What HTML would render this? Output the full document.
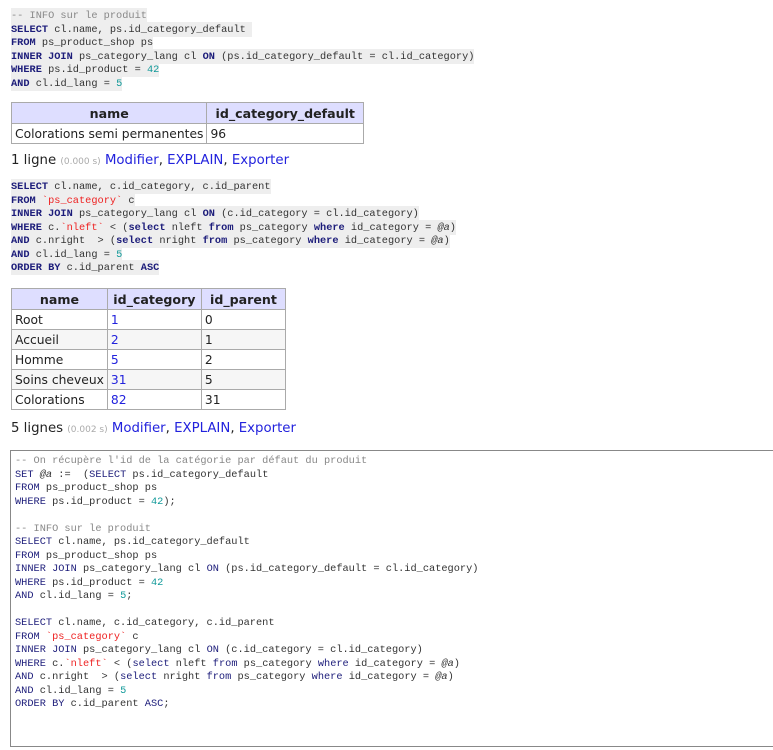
<!DOCTYPE html>
<html><head><meta charset="utf-8"><style>
body{margin:0;background:#fff;width:773px;height:750px;overflow:hidden;position:relative;font-family:"DejaVu Sans",Verdana,sans-serif;color:#222}
.code{position:absolute;left:11px;font-family:"Liberation Mono",monospace;font-size:10.3px;line-height:13.5px;color:#333;white-space:pre}
.code span.l{background:#eee;padding:2px 0 1px}
.k{color:#1c1c7a;font-weight:600}
.c{color:#888}
.n{color:#199}
.s{color:#e22}
.v{font-style:italic}
table{position:absolute;border-collapse:collapse;font-size:12.3px;left:11px}
td,th{border:1px solid #aaa;padding:0 3px;height:19px;text-align:left;white-space:nowrap}
th{background:#dedeff;text-align:center;font-weight:bold;height:20px;font-size:12.6px}
tr:nth-child(odd) td{background:#f6f6f6}
.b{color:#22d}
.info{position:absolute;left:11px;font-size:13.3px;white-space:nowrap}
.info small{font-size:9px;color:#aaa}
.info a{color:#22d}
.ta{position:absolute;left:10px;top:450px;width:770px;height:297px;border:1px solid #888;border-right:none;box-sizing:border-box}
.ta .code{left:4px;top:4px}
.ta .k{font-weight:normal}
</style></head><body>
<div class="code" style="top:10px"><span class="l c">-- INFO sur le produit</span>
<span class="l"><span class="k">SELECT</span> cl.name, ps.id_category_default </span>
<span class="l"><span class="k">FROM</span> ps_product_shop ps</span>
<span class="l"><span class="k">INNER JOIN</span> ps_category_lang cl <span class="k">ON</span> (ps.id_category_default = cl.id_category)</span>
<span class="l"><span class="k">WHERE</span> ps.id_product = <span class="n">42</span></span>
<span class="l"><span class="k">AND</span> cl.id_lang = <span class="n">5</span></span></div>

<table style="top:102px;width:353px"><tr><th style="width:188px">name</th><th>id_category_default</th></tr>
<tr><td style="background:#fff">Colorations semi permanentes</td><td style="background:#fff">96</td></tr></table>
<div class="info" style="top:153px">1 ligne <small>(0.000 s)</small> <a>Modifier</a>, <a>EXPLAIN</a>, <a>Exporter</a></div>

<div class="code" style="top:181px"><span class="l"><span class="k">SELECT</span> cl.name, c.id_category, c.id_parent</span>
<span class="l"><span class="k">FROM</span> <span class="s">`ps_category`</span> c</span>
<span class="l"><span class="k">INNER JOIN</span> ps_category_lang cl <span class="k">ON</span> (c.id_category = cl.id_category)</span>
<span class="l"><span class="k">WHERE</span> c.<span class="s">`nleft`</span> &lt; (<span class="k">select</span> nleft <span class="k">from</span> ps_category <span class="k">where</span> id_category = <span class="v">@a</span>)</span>
<span class="l"><span class="k">AND</span> c.nright  &gt; (<span class="k">select</span> nright <span class="k">from</span> ps_category <span class="k">where</span> id_category = <span class="v">@a</span>)</span>
<span class="l"><span class="k">AND</span> cl.id_lang = <span class="n">5</span></span>
<span class="l"><span class="k">ORDER BY</span> c.id_parent <span class="k">ASC</span></span></div>

<table style="top:288px;width:275px"><tr><th style="width:88px">name</th><th style="width:87px">id_category</th><th>id_parent</th></tr>
<tr><td style="background:#fff">Root</td><td style="background:#fff" class="b">1</td><td style="background:#fff">0</td></tr>
<tr><td>Accueil</td><td class="b">2</td><td>1</td></tr>
<tr><td style="background:#fff">Homme</td><td style="background:#fff" class="b">5</td><td style="background:#fff">2</td></tr>
<tr><td>Soins cheveux</td><td class="b">31</td><td>5</td></tr>
<tr><td style="background:#fff">Colorations</td><td style="background:#fff" class="b">82</td><td style="background:#fff">31</td></tr></table>
<div class="info" style="top:421px">5 lignes <small>(0.002 s)</small> <a>Modifier</a>, <a>EXPLAIN</a>, <a>Exporter</a></div>

<div class="ta"><div class="code"><span class="c">-- On récupère l'id de la catégorie par défaut du produit</span>
<span class="k">SET</span> <span class="v">@a</span> :=  (<span class="k">SELECT</span> ps.id_category_default
<span class="k">FROM</span> ps_product_shop ps
<span class="k">WHERE</span> ps.id_product = <span class="n">42</span>);

<span class="c">-- INFO sur le produit</span>
<span class="k">SELECT</span> cl.name, ps.id_category_default
<span class="k">FROM</span> ps_product_shop ps
<span class="k">INNER JOIN</span> ps_category_lang cl <span class="k">ON</span> (ps.id_category_default = cl.id_category)
<span class="k">WHERE</span> ps.id_product = <span class="n">42</span>
<span class="k">AND</span> cl.id_lang = <span class="n">5</span>;

<span class="k">SELECT</span> cl.name, c.id_category, c.id_parent
<span class="k">FROM</span> <span class="s">`ps_category`</span> c
<span class="k">INNER JOIN</span> ps_category_lang cl <span class="k">ON</span> (c.id_category = cl.id_category)
<span class="k">WHERE</span> c.<span class="s">`nleft`</span> &lt; (<span class="k">select</span> nleft <span class="k">from</span> ps_category <span class="k">where</span> id_category = <span class="v">@a</span>)
<span class="k">AND</span> c.nright  &gt; (<span class="k">select</span> nright <span class="k">from</span> ps_category <span class="k">where</span> id_category = <span class="v">@a</span>)
<span class="k">AND</span> cl.id_lang = <span class="n">5</span>
<span class="k">ORDER BY</span> c.id_parent <span class="k">ASC</span>;</div></div>
</body></html>
